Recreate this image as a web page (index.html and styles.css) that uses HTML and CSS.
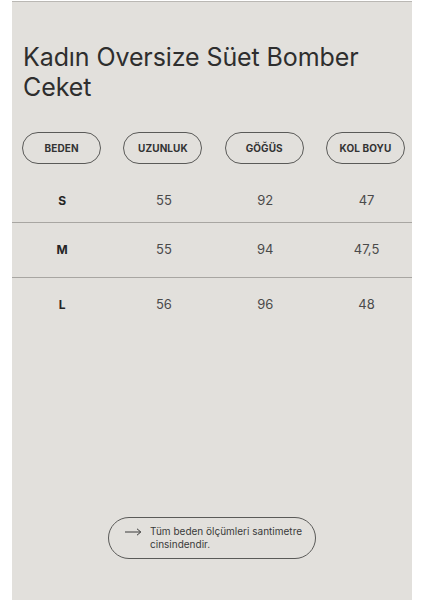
FILE: index.html
```html
<!DOCTYPE html>
<html lang="tr">
<head>
<meta charset="utf-8">
<title>Kadın Oversize Süet Bomber Ceket</title>
<link rel="stylesheet" href="styles.css">
</head>
<body>
<main class="panel">
  <h1 class="title">Kadın Oversize Süet Bomber<br>Ceket</h1>
  <div class="table">
    <div class="head">
      <span class="pill">BEDEN</span>
      <span class="pill">UZUNLUK</span>
      <span class="pill">GÖĞÜS</span>
      <span class="pill">KOL BOYU</span>
    </div>
    <div class="row first">
      <span class="size">S</span><span class="val">55</span><span class="val">92</span><span class="val">47</span>
    </div>
    <div class="row">
      <span class="size">M</span><span class="val">55</span><span class="val">94</span><span class="val">47,5</span>
    </div>
    <div class="row">
      <span class="size">L</span><span class="val">56</span><span class="val">96</span><span class="val">48</span>
    </div>
  </div>
  <div class="note">
    <svg class="arrow" width="17" height="8" viewBox="0 0 17 8"><path d="M0 4H15.5M12 0.8L15.8 4L12 7.2" fill="none" stroke="#3a3a3a" stroke-width="1"/></svg>
    <p>Tüm beden ölçümleri santimetre<br>cinsindendir.</p>
  </div>
</main>
</body>
</html>
```
FILE: styles.css
```css
html, body {
  margin: 0;
  padding: 0;
  background: #ffffff;
}
body {
  padding-top: 1px;
  font-family: Inter, "Liberation Sans", sans-serif;
}
.panel {
  margin-left: 12px;
  width: 400px;
  height: 599px;
  box-sizing: border-box;
  background: #e2e0dc;
  border-top: 1px solid #bab8b4;
  display: flex;
  flex-direction: column;
}
.title {
  margin: 0;
  padding: 40px 0 0 11px;
  font-size: 25px;
  line-height: 30px;
  font-weight: 400;
  color: #2e2e2e;
  letter-spacing: -0.1px;
}
.table {
  margin-top: 30px;
  display: flex;
  flex-direction: column;
}
.head, .row {
  display: grid;
  grid-template-columns: repeat(4, 101.3px);
  justify-items: center;
  align-items: center;
}
.head { margin-left: -1px; }
.pill {
  width: 79px;
  height: 32px;
  box-sizing: border-box;
  border: 1px solid #5a5a58;
  border-radius: 16px;
  display: flex;
  align-items: center;
  justify-content: center;
  font-size: 10px;
  font-weight: 700;
  color: #333;
  letter-spacing: 0.1px;
}
.row {
  height: 55px;
  box-sizing: border-box;
  border-top: 1px solid #a8a6a2;
  padding-bottom: 2px;
}
.row.first {
  border-top: none;
  height: 58px;
  padding: 14px 0 0;
}
.row > span:first-child { margin-left: -1px; }
.size {
  font-size: 12px;
  font-weight: 700;
  color: #252525;
}
.val {
  font-size: 13px;
  color: #4a4a4a;
}
.note {
  margin: 185px auto 0;
  width: 208px;
  height: 42px;
  box-sizing: border-box;
  border: 1px solid #5a5a58;
  border-radius: 21px;
  display: flex;
  align-items: center;
  gap: 8px;
  padding-left: 16px;
}
.note .arrow { flex: none; margin-top: -12px; }
.note p {
  margin: 0;
  font-size: 10px;
  line-height: 13px;
  color: #3a3a3a;
}
```
